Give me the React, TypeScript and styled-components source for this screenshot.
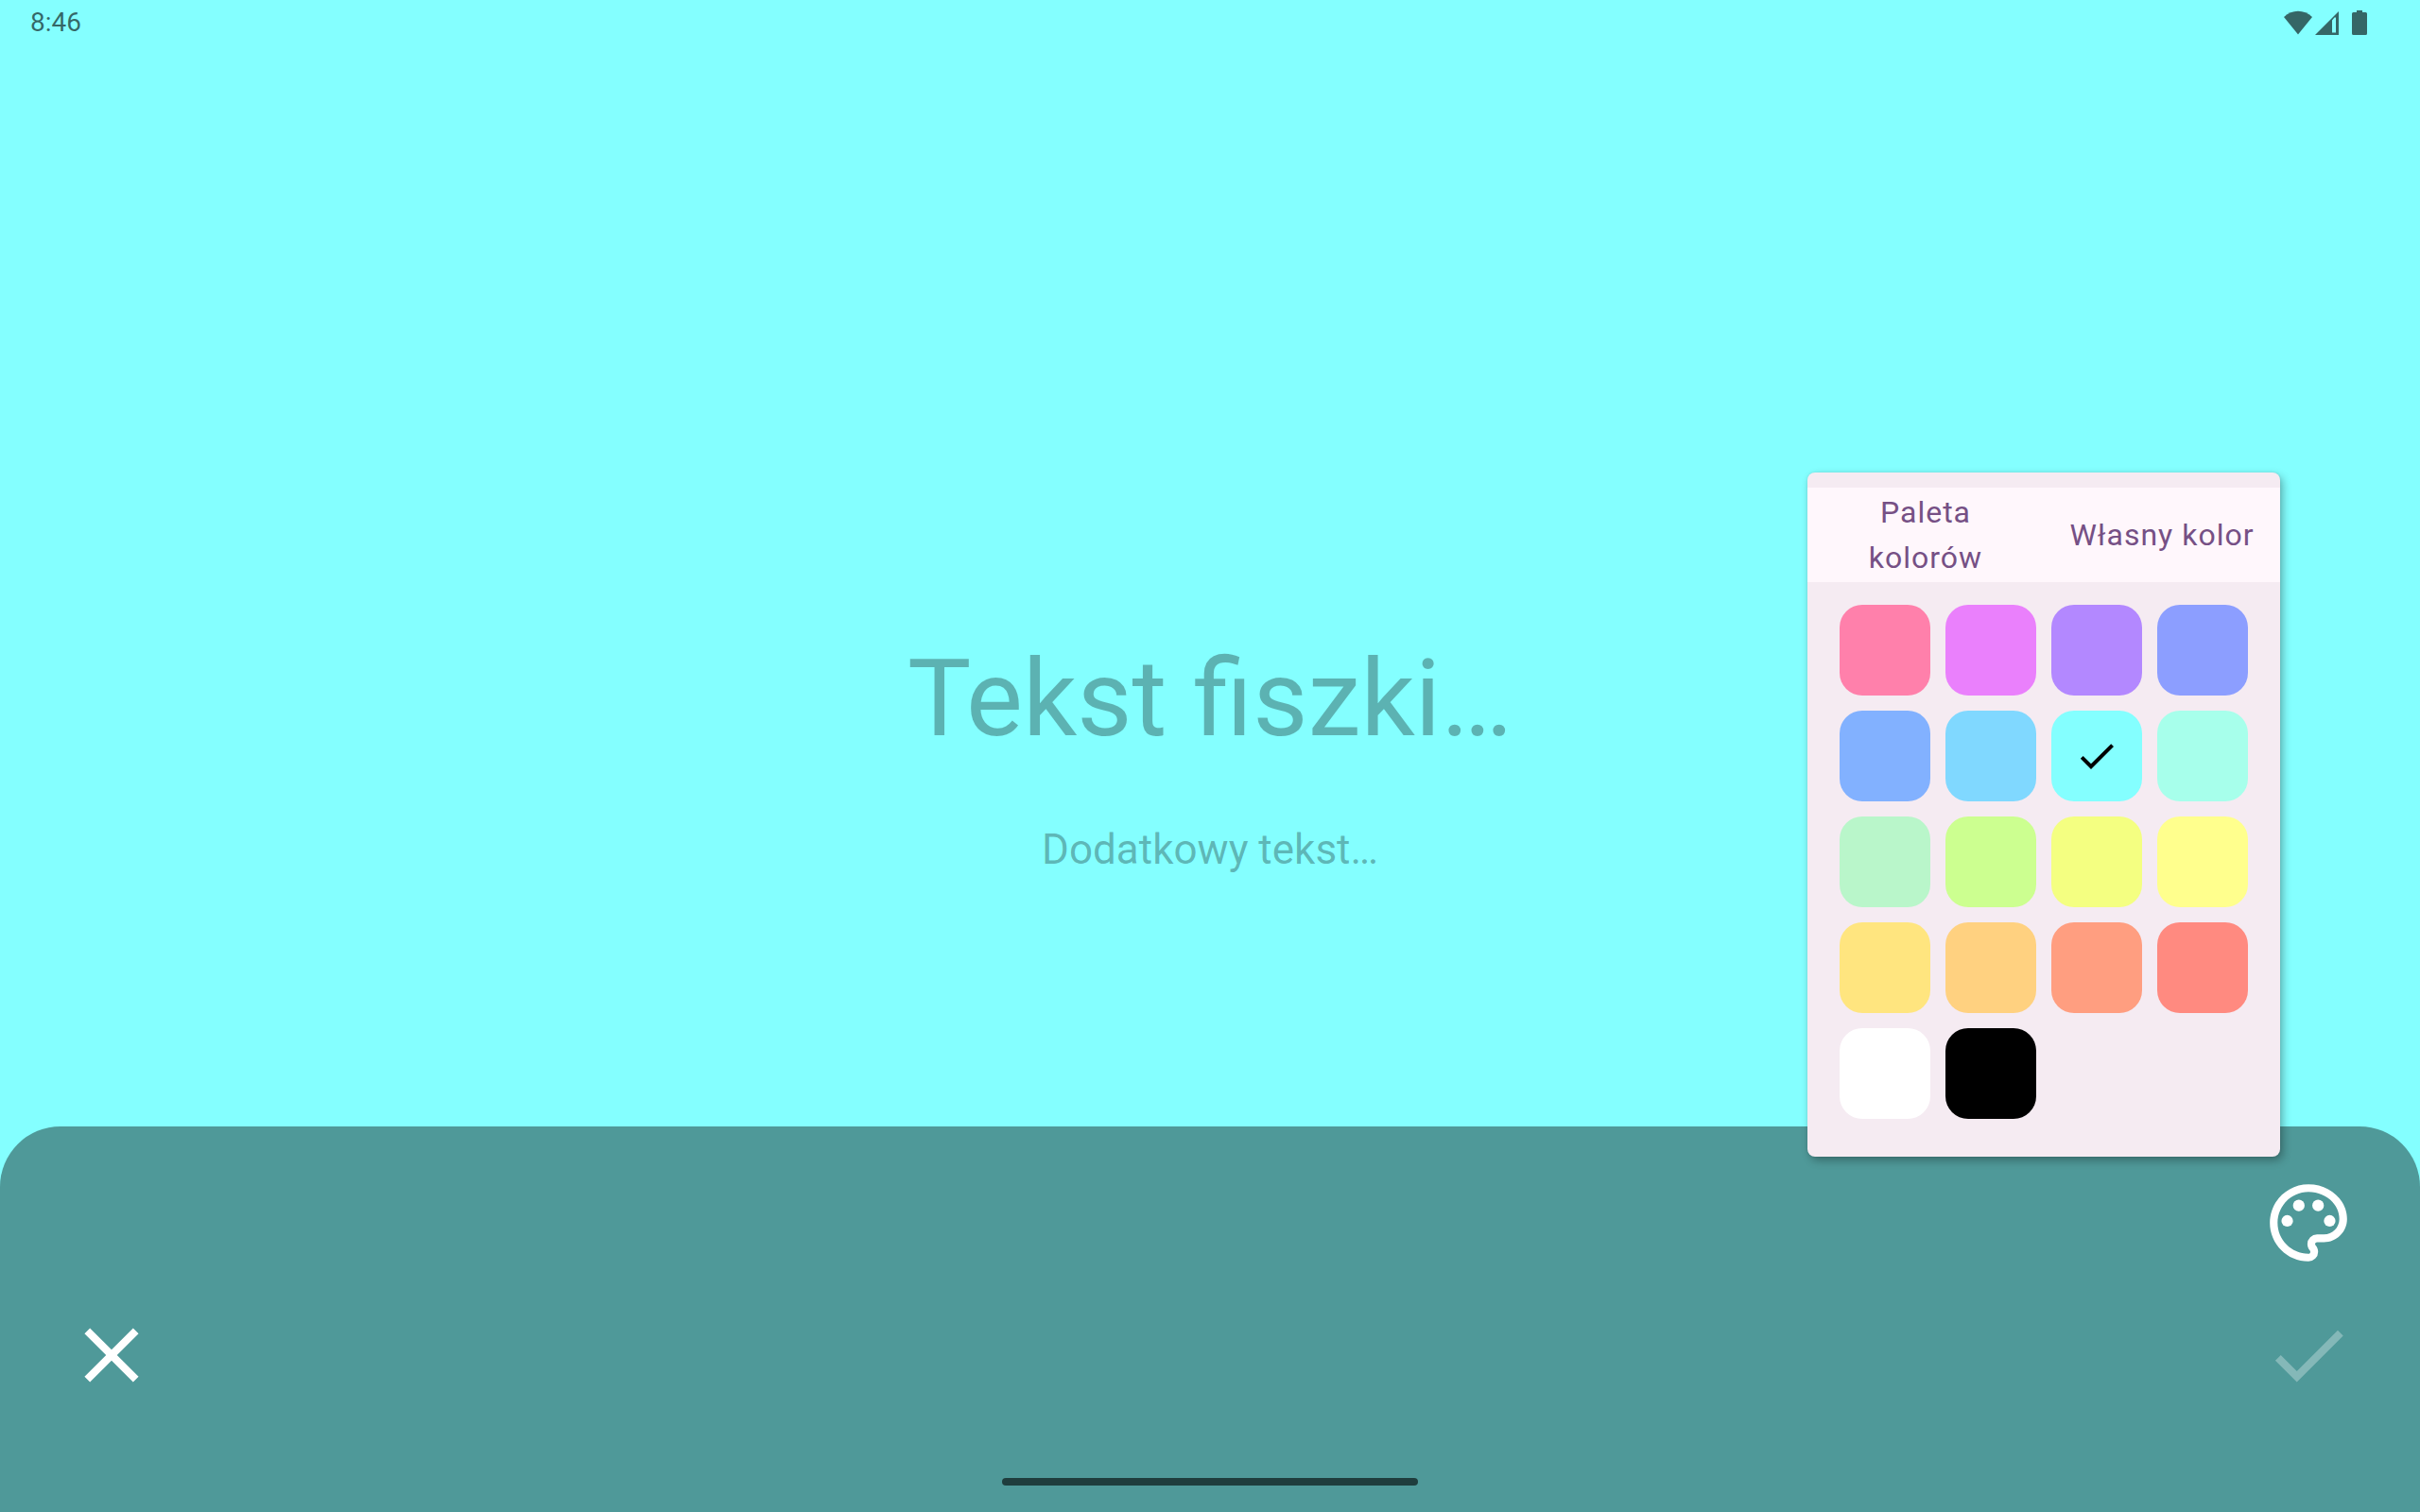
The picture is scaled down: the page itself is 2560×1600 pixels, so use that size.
import React, { useState } from "react";
import styled, { createGlobalStyle } from "styled-components";

const GlobalStyle = createGlobalStyle`
  *, *::before, *::after { box-sizing: border-box; }
  html, body { margin: 0; padding: 0; }
  body { font-family: Roboto, "Noto Sans", sans-serif; }
  button, input { font: inherit; color: inherit; }
`;

const Screen = styled.div<{ $color: string }>`
  display: grid;
  grid-template: minmax(100vh, auto) / minmax(0, 1fr);
  background: ${(p) => p.$color};

  > * {
    grid-area: 1 / 1;
  }
`;

const StatusBar = styled.header`
  align-self: start;
  display: flex;
  align-items: center;
  justify-content: space-between;
  height: 48px;
  padding: 0 56px 0 32px;
  color: rgba(0, 0, 0, 0.6);
`;

const Clock = styled.time`
  font-size: 28px;
  line-height: 32px;
`;

const StatusIcons = styled.svg`
  width: 88px;
  height: 26px;
  fill: currentColor;
`;

const CardForm = styled.main`
  align-self: center;
  display: flex;
  flex-direction: column;
  gap: 68px;
`;

const Field = styled.input<{ $size: number; $line: number }>`
  width: 100%;
  height: ${(p) => p.$line}px;
  padding: 0;
  border: 0;
  outline: 0;
  background: transparent;
  color: rgba(0, 0, 0, 0.87);
  font-size: ${(p) => p.$size}px;
  line-height: ${(p) => p.$line}px;
  text-align: center;

  &::placeholder {
    color: rgba(0, 0, 0, 0.3);
    opacity: 1;
  }
`;

const BottomPanel = styled.footer`
  align-self: end;
  display: flex;
  flex-direction: column;
  align-items: center;
  padding: 53px 69px 28px;
  border-radius: 64px 64px 0 0;
  background: #4f9999;
`;

const Actions = styled.div`
  display: flex;
  align-self: stretch;
  align-items: flex-end;
  justify-content: space-between;
  margin-bottom: 81px;
`;

const ActionColumn = styled.div`
  display: flex;
  flex-direction: column;
  gap: 42px;
`;

const IconButton = styled.button`
  display: block;
  width: 98px;
  height: 98px;
  padding: 0;
  border: 0;
  background: transparent;
  color: #fff;

  &:disabled {
    opacity: 0.3;
  }
`;

const Icon = styled.svg`
  display: block;
  width: 100%;
  height: 100%;
  fill: currentColor;
`;

const HomeIndicator = styled.div`
  width: 440px;
  height: 8px;
  border-radius: 4px;
  background: rgba(0, 0, 0, 0.6);
`;

const PaletteAnchor = styled.div`
  position: relative;
`;

const Popover = styled.section`
  position: absolute;
  right: 79px;
  bottom: 119px;
  width: 500px;
  padding: 16px 0 40px;
  border-radius: 8px;
  background: #f5ebf2;
  box-shadow: 3px 4px 10px rgba(0, 0, 0, 0.3), 0 0 3px rgba(0, 0, 0, 0.1);
`;

const Tabs = styled.div`
  display: grid;
  grid-template-columns: 1fr 1fr;
  min-height: 100px;
  margin-bottom: 24px;
  background: #fff7fc;
`;

const Tab = styled.button`
  padding: 0 24px;
  border: 0;
  background: transparent;
  color: #765085;
  font-size: 32px;
  line-height: 48px;
  letter-spacing: 1px;
`;

const Swatches = styled.div`
  display: grid;
  grid-template-columns: repeat(4, 96px);
  gap: 16px;
  justify-content: center;
`;

const Swatch = styled.button<{ $color: string }>`
  display: flex;
  align-items: center;
  justify-content: center;
  height: 96px;
  padding: 24px;
  border: 0;
  border-radius: 24px;
  background: ${(p) => p.$color};
  color: #000;
`;

const COLORS = [
  "#ff80ab", "#ea80fc", "#b388ff", "#8c9eff",
  "#82b1ff", "#80d8ff", "#84ffff", "#a7ffeb",
  "#b9f6ca", "#ccff90", "#f4ff81", "#ffff8d",
  "#ffe57f", "#ffd180", "#ff9e80", "#ff8a80",
  "#ffffff", "#000000",
];

const CheckIcon = () => (
  <Icon viewBox="0 0 24 24" aria-hidden="true">
    <path d="M9 16.17 4.83 12l-1.42 1.41L9 19 21 7l-1.41-1.41z" />
  </Icon>
);

const CloseIcon = () => (
  <Icon viewBox="0 0 24 24" aria-hidden="true">
    <path d="M19 6.41 17.59 5 12 10.59 6.41 5 5 6.41 10.59 12 5 17.59 6.41 19 12 13.41 17.59 19 19 17.59 13.41 12z" />
  </Icon>
);

const PaletteIcon = () => (
  <Icon viewBox="0 0 24 24" aria-hidden="true">
    <path d="M12 22C6.49 22 2 17.51 2 12S6.49 2 12 2s10 4.04 10 9c0 3.31-2.69 6-6 6h-1.77c-.28 0-.5.22-.5.5 0 .12.05.23.13.33.41.47.64 1.06.64 1.67A2.5 2.5 0 0 1 12 22zm0-18c-4.41 0-8 3.59-8 8s3.59 8 8 8c.28 0 .5-.22.5-.5a.54.54 0 0 0-.14-.35c-.41-.46-.63-1.05-.63-1.65a2.5 2.5 0 0 1 2.5-2.5H16c2.21 0 4-1.79 4-4 0-3.86-3.59-7-8-7z" />
    <circle cx="6.5" cy="11.5" r="1.5" />
    <circle cx="9.5" cy="7.5" r="1.5" />
    <circle cx="14.5" cy="7.5" r="1.5" />
    <circle cx="17.5" cy="11.5" r="1.5" />
  </Icon>
);

export default function App() {
  const [color, setColor] = useState("#84ffff");
  const [open, setOpen] = useState(true);
  const [text, setText] = useState("");
  const [extra, setExtra] = useState("");

  return (
    <>
      <GlobalStyle />
      <Screen $color={color}>
        <StatusBar>
          <Clock dateTime="08:46">8:46</Clock>
          <StatusIcons viewBox="0 0 88 26" aria-hidden="true">
            <path d="M0 7C8.500-1.500 21.500-1.500 30 7L15 25.500z" />
            <path fillRule="evenodd" d="M58 1v25H33zM51 10.500V23.500h4V7.500H53.500z" />
            <path d="M77 0h6v2h3.500q1.500 0 1.500 1.500v21q0 1.500-1.500 1.500h-13q-1.500 0-1.500-1.500v-21q0-1.500 1.500-1.500H77z" />
          </StatusIcons>
        </StatusBar>

        <CardForm>
          <Field
            $size={113}
            $line={130}
            aria-label="Tekst fiszki"
            placeholder="Tekst fiszki…"
            value={text}
            onChange={(e) => setText(e.target.value)}
          />
          <Field
            $size={44}
            $line={52}
            aria-label="Dodatkowy tekst"
            placeholder="Dodatkowy tekst…"
            value={extra}
            onChange={(e) => setExtra(e.target.value)}
          />
        </CardForm>

        <BottomPanel>
          <Actions>
            <IconButton type="button" aria-label="Zamknij">
              <CloseIcon />
            </IconButton>
            <ActionColumn>
              <PaletteAnchor>
                <IconButton
                  type="button"
                  aria-label="Kolor"
                  aria-expanded={open}
                  onClick={() => setOpen(!open)}
                >
                  <PaletteIcon />
                </IconButton>
                {open && (
                  <Popover>
                    <Tabs role="tablist">
                      <Tab type="button" role="tab" aria-selected="true">
                        Paleta kolorów
                      </Tab>
                      <Tab type="button" role="tab" aria-selected="false">
                        Własny kolor
                      </Tab>
                    </Tabs>
                    <Swatches>
                      {COLORS.map((c) => (
                        <Swatch
                          key={c}
                          type="button"
                          $color={c}
                          aria-label={c}
                          aria-pressed={c === color}
                          onClick={() => setColor(c)}
                        >
                          {c === color && <CheckIcon />}
                        </Swatch>
                      ))}
                    </Swatches>
                  </Popover>
                )}
              </PaletteAnchor>
              <IconButton type="button" aria-label="Zapisz" disabled={text === ""}>
                <CheckIcon />
              </IconButton>
            </ActionColumn>
          </Actions>
          <HomeIndicator />
        </BottomPanel>
      </Screen>
    </>
  );
}
